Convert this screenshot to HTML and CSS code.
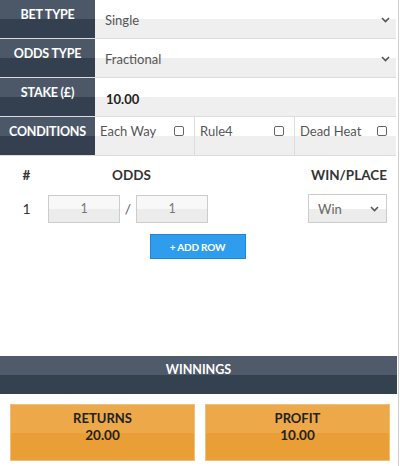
FILE: index.html
```html
<!DOCTYPE html>
<html>
<head>
<meta charset="utf-8">
<link rel="stylesheet" href="styles.css">
</head>
<body>
<div class="app">
  <div class="form">
    <div class="row">
      <div class="label">BET TYPE</div>
      <div class="field select">
        <span>Single</span>
        <svg class="chev" width="9" height="6" viewBox="0 0 9 6"><path d="M1 1l3.5 3.5L8 1" fill="none" stroke="#555" stroke-width="1.6"/></svg>
      </div>
    </div>
    <div class="row">
      <div class="label">ODDS TYPE</div>
      <div class="field select">
        <span>Fractional</span>
        <svg class="chev" width="9" height="6" viewBox="0 0 9 6"><path d="M1 1l3.5 3.5L8 1" fill="none" stroke="#555" stroke-width="1.6"/></svg>
      </div>
    </div>
    <div class="row">
      <div class="label">STAKE (£)</div>
      <div class="field stake"><span>10.00</span></div>
    </div>
    <div class="row">
      <div class="label">CONDITIONS</div>
      <div class="conds">
        <div class="cond"><span>Each Way</span><i class="cb"></i></div>
        <div class="cond"><span>Rule4</span><i class="cb"></i></div>
        <div class="cond"><span>Dead Heat</span><i class="cb"></i></div>
      </div>
    </div>
  </div>

  <div class="table">
    <div class="thead">
      <div class="c-num">#</div>
      <div class="c-odds">ODDS</div>
      <div class="c-wp">WIN/PLACE</div>
    </div>
    <div class="trow">
      <div class="c-num">1</div>
      <div class="c-odds odds">
        <div class="oin">1</div>
        <span class="slash">/</span>
        <div class="oin">1</div>
      </div>
      <div class="c-wp">
        <div class="wsel"><span>Win</span>
          <svg width="9" height="6" viewBox="0 0 9 6"><path d="M1 1l3.5 3.5L8 1" fill="none" stroke="#555" stroke-width="1.6"/></svg>
        </div>
      </div>
    </div>
    <div class="btnwrap"><div class="btn">+ ADD ROW</div></div>
  </div>

  <div class="winnings">WINNINGS</div>
  <div class="results">
    <div class="res"><div class="rt">RETURNS</div><div class="rv">20.00</div></div>
    <div class="res"><div class="rt">PROFIT</div><div class="rv">10.00</div></div>
  </div>
</div>
</body>
</html>
```

FILE: styles.css
```css
* { box-sizing: border-box; }
html, body { margin: 0; padding: 0; background: #fff; }
body {
  font-family: Lato, "Open Sans", sans-serif;
  color: #333;
  width: 400px;
  height: 466px;
  overflow: hidden;
}
.app {
  width: 399px;
  height: 466px;
  border-right: 1px solid #cfcfcf;
  padding-right: 2px;
  display: flex;
  flex-direction: column;
}
.form { display: flex; flex-direction: column; }
.row {
  display: grid;
  grid-template-columns: 95px 1fr;
  height: 39px;
  border-bottom: 1px solid #dcdcdc;
}
.label {
  background: linear-gradient(#4c5767 0, #4c5767 50%, #34404f 50%, #34404f 100%);
  color: #fff;
  font-weight: 700;
  font-size: 12.5px;
  text-align: center;
  padding-top: 7px;
  letter-spacing: -0.2px;
}
.field {
  background: linear-gradient(#fff 0, #fff 50%, #efefef 50%, #efefef 100%);
  display: flex;
  align-items: center;
  padding: 2px 6px 0 10px;
  font-size: 13px;
  color: #555;
}
.select { justify-content: space-between; }
.select .chev { margin-top: -1px; }
.stake span { font-weight: 700; color: #222; padding-left: 1px; padding-top: 2px; }
.conds {
  display: grid;
  grid-template-columns: 100px 100px 1fr;
}
.cond {
  background: linear-gradient(#fff 0, #fff 50%, #efefef 50%, #efefef 100%);
  border-right: 1px solid #dcdcdc;
  display: flex;
  justify-content: space-between;
  align-items: flex-start;
  padding: 6px 10px 0 5px;
  font-size: 13px;
  color: #555;
}
.cond:last-child { border-right: 0; padding-right: 9px; }
.cb {
  display: block;
  width: 10px;
  height: 10px;
  border: 1px solid #666;
  border-radius: 2px;
  margin-top: 3px;
}
.table { flex: 1; display: flex; flex-direction: column; }
.thead, .trow {
  display: grid;
  grid-template-columns: 48px 167px 1fr;
  align-items: center;
}
.thead {
  margin-top: 10px;
  font-weight: 700;
  font-size: 13.5px;
  color: #333;
  height: 18px;
}
.c-num { text-align: center; padding-left: 5px; }
.c-odds { text-align: center; padding-left: 0; }
.c-wp { text-align: right; padding-right: 9px; }
.trow { margin-top: 10px; height: 29px; }
.trow .c-num { font-size: 14px; color: #333; }
.odds { display: flex; align-items: center; gap: 0; }
.oin {
  width: 72px;
  height: 28px;
  border: 1px solid #ccc;
  background: linear-gradient(#f8f8f8 0, #f8f8f8 50%, #ececec 50%, #ececec 100%);
  color: #777;
  font-size: 12.5px;
  display: flex;
  align-items: center;
  justify-content: center;
}
.slash { width: 16px; text-align: center; font-size: 14px; color: #555; }
.c-wp { display: flex; justify-content: flex-end; }
.wsel {
  width: 79px;
  height: 29px;
  border: 1px solid #ccc;
  background: linear-gradient(#fff 0, #fff 50%, #ececec 50%, #ececec 100%);
  display: flex;
  align-items: center;
  justify-content: space-between;
  padding: 0 7px 0 9px;
  font-size: 13px;
  color: #666;
}
.btnwrap { display: flex; justify-content: center; margin-top: 11px; padding-right: 1px; }
.btn {
  width: 96px;
  height: 25px;
  background: #2f9ded;
  border: 1px solid #2186d4;
  color: #fff;
  font-size: 10px;
  font-weight: 700;
  display: flex;
  align-items: center;
  justify-content: center;
  letter-spacing: -0.2px;
}
.winnings {
  height: 38px;
  background: linear-gradient(#4f5b6b 0, #4f5b6b 50%, #34414f 50%, #34414f 100%);
  color: #fff;
  font-weight: 700;
  font-size: 12.5px;
  text-align: center;
  padding-top: 6px;
  margin-right: -1px;
}
.results {
  display: grid;
  grid-template-columns: 185px 185px;
  gap: 10px;
  padding: 10px 0 5px 10px;
}
.res {
  height: 57px;
  background: linear-gradient(#eca849 0, #eca849 50%, #ea9e36 50%, #ea9e36 100%);
  border: 1px solid #f0c07a;
  text-align: center;
  color: #222;
  font-weight: 700;
  font-size: 13px;
  padding-top: 5px;
  line-height: 17px;
}
.rv { font-size: 13.5px; }
```
